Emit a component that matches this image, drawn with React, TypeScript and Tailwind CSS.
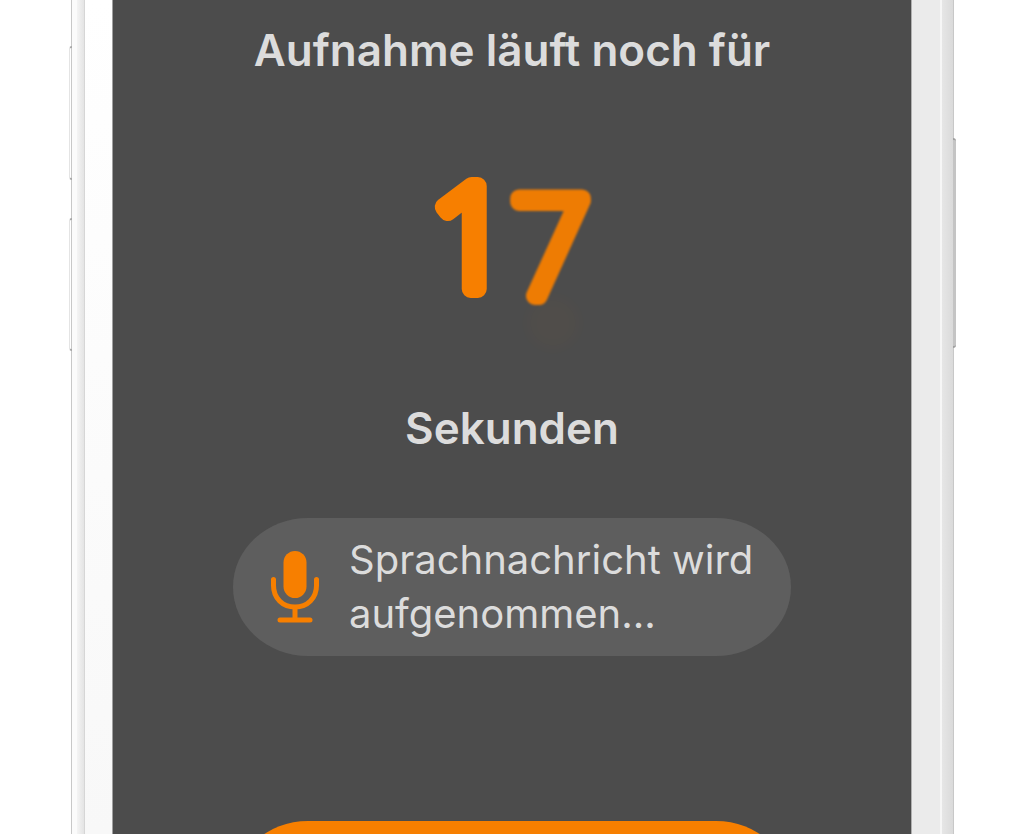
import type { ReactNode } from "react";

function MicIcon() {
  return (
    <svg viewBox="0 0 48 72" className="h-[72px] w-12 shrink-0" fill="none" aria-hidden="true">
      <rect x="12.500" y="0" width="23" height="47" rx="11.500" fill="#f77f00" />
      <path
        d="M2.500 28.500V34.500C2.500 47 11.500 56 24 56S45.500 47 45.500 34.500V28.500"
        stroke="#f77f00"
        strokeWidth="5"
        strokeLinecap="round"
      />
      <path d="M24 56V68" stroke="#f77f00" strokeWidth="5" />
      <path d="M9 69H39" stroke="#f77f00" strokeWidth="5" strokeLinecap="round" />
    </svg>
  );
}

// Thin digits with a fat round stroke; the last one is rolling in.
function Countdown() {
  return (
    <svg
      viewBox="0 0 180 200"
      className="mt-[75px] h-[200px] w-[180px] overflow-visible fill-[#f77f00] stroke-[#f77f00] [stroke-linecap:round] [stroke-linejoin:round]"
      role="timer"
    >
      <circle cx="131" cy="168" r="26" className="stroke-none opacity-2 blur-[6px]" />
      <text
        x="90"
        y="134"
        textAnchor="end"
        strokeWidth="18"
        className="font-['Open_Sans',sans-serif] text-[144px] font-light"
      >
        1
      </text>
      <text
        x="92"
        y="141"
        strokeWidth="18"
        className="font-['Roboto',sans-serif] text-[138px] font-thin opacity-95 blur-[1px]"
      >
        7
      </text>
    </svg>
  );
}

function PhoneFrame({ children }: { children: ReactNode }) {
  return (
    <div className="relative flex h-screen border-x border-[#c8c8c8] bg-white">
      <div className="absolute top-[46px] -left-[3px] h-[134px] w-[3px] rounded-l-sm border-y-2 border-l border-[#a8a8a8] border-l-[#e4e4e4]" />
      <div className="absolute top-[218px] -left-[3px] h-[133px] w-[3px] rounded-l-sm border-y-2 border-l border-[#a8a8a8] border-l-[#e4e4e4]" />
      <div className="absolute top-[138px] -right-[3px] h-[210px] w-[3px] rounded-r-sm border-y-2 border-[#a0a0a0] bg-[#c4c4c4]" />

      <div className="w-[5px] bg-[#fbfbfb]" />
      <div className="w-2 border-r border-[#d6d6d6] bg-linear-to-r from-[#f4f4f4] to-[#e4e4e4]" />
      <div className="w-7 border-r border-[#a0a0a0] bg-linear-to-b from-white to-[#f8f8f8]" />
      <div className="min-w-0 flex-1 overflow-hidden bg-[#4c4c4c]">{children}</div>
      <div className="w-[29px] border-l border-[#b0b0b0] bg-[#ebebeb]" />
      <div className="w-[13px] border-l-2 border-[#f6f6f6] bg-linear-to-r from-[#e6e6e6] to-[#dadada]" />
    </div>
  );
}

export default function App() {
  return (
    <div className="h-screen overflow-hidden bg-white pr-[6.5%] pl-[7%] font-['Inter',sans-serif]">
      <PhoneFrame>
        <main className="flex flex-col items-center text-[#dcdcdc]">
          <h1 className="mt-5 text-center text-[44px] leading-[60px] font-semibold">
            Aufnahme läuft noch für
          </h1>
          <Countdown />
          <p className="mt-[43px] text-[44px] leading-[60px] font-semibold">Sekunden</p>

          <div
            role="status"
            className="mt-[60px] flex min-h-[138px] w-[70%] items-center gap-[30px] rounded-[76px/70px] bg-[#5e5e5e] px-[38px] text-[40px] leading-[54px]"
          >
            <MicIcon />
            <p className="whitespace-nowrap">
              Sprachnachricht wird
              <br />
              aufgenommen...
            </p>
          </div>

          <button
            type="button"
            aria-label="Aufnahme beenden"
            className="mt-[165px] h-[138px] w-[70%] shrink-0 rounded-[76px/70px] bg-[#f77f00]"
          />
        </main>
      </PhoneFrame>
    </div>
  );
}
